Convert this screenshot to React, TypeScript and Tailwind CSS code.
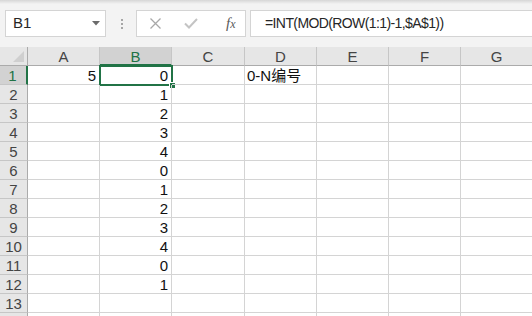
import React from "react";

const COLS = ["A", "B", "C", "D", "E", "F", "G"];
const B_VALUES = ["0", "1", "2", "3", "4", "0", "1", "2", "3", "4", "0", "1"];

function NameBox() {
  return (
    <div className="ml-[5px] flex h-[27px] w-[101px] items-center justify-between border border-[#d4d4d4] bg-white pl-[7px] pr-[5px] text-[15px] text-[#262626]">
      <span>B1</span>
      <svg width="8" height="5" viewBox="0 0 8 5">
        <path d="M0 0 H8 L4 4.5 Z" fill="#6b6b6b" />
      </svg>
    </div>
  );
}

function FormulaButtons() {
  return (
    <div className="ml-[13px] flex h-[27px] w-[110px] items-center border border-[#d4d4d4] bg-white">
      <svg className="ml-[12px]" width="13" height="13" viewBox="0 0 13 13">
        <path d="M1.5 1.5 L11.5 11.5 M11.5 1.5 L1.5 11.5" stroke="#a8a8a8" strokeWidth="1.3" />
      </svg>
      <svg className="ml-[22px]" width="14" height="11" viewBox="0 0 14 11">
        <path d="M1 5.5 L5 9.5 L13 1" stroke="#c4c4c4" strokeWidth="2" fill="none" />
      </svg>
      <span className="ml-[28px] font-['Liberation_Serif',serif] text-[15px] italic leading-none text-[#5a5a5a]">
        f<span className="text-[12px]">x</span>
      </span>
    </div>
  );
}

function Toolbar() {
  return (
    <div className="h-[47px] bg-[#f3f3f3]">
      <div className="h-[4px] bg-linear-to-b from-[#d6d6d6] to-[#f3f3f3]" />
      <div className="mt-[6px] flex items-center">
        <NameBox />
        <div className="ml-[15px] flex flex-col gap-[2px]">
          <div className="h-[2px] w-[2px] bg-[#a6a6a6]" />
          <div className="h-[2px] w-[2px] bg-[#a6a6a6]" />
          <div className="h-[2px] w-[2px] bg-[#a6a6a6]" />
        </div>
        <FormulaButtons />
        <div className="ml-[4px] flex h-[27px] flex-1 items-center border border-r-0 border-[#d4d4d4] bg-white pl-[14px] text-[14px] tracking-[-0.6px] text-[#262626]">
          =INT(MOD(ROW(1:1)-1,$A$1))
        </div>
      </div>
    </div>
  );
}

function HeaderRow() {
  return (
    <div className="grid h-[19px] grid-cols-[28px_72px_72px_73px_72px_72px_72px_72px] bg-[#e6e6e6]">
      <div className="relative border-r border-b border-[#ababab]">
        <svg className="absolute right-[3px] bottom-[3px]" width="11" height="11" viewBox="0 0 11 11">
          <path d="M11 0 V11 H0 Z" fill="#cfcfcf" />
        </svg>
      </div>
      {COLS.map((c) =>
        c === "B" ? (
          <div
            key={c}
            className="flex items-center justify-center border-r border-b-2 border-r-[#c6c6c6] border-b-[#217346] bg-[#d2d2d2] pt-[1px] text-[15px] leading-none text-[#217346]"
          >
            {c}
          </div>
        ) : (
          <div
            key={c}
            className="flex items-center justify-center border-r border-b border-r-[#c6c6c6] border-b-[#ababab] text-[15px] leading-none text-[#444]"
          >
            {c}
          </div>
        )
      )}
    </div>
  );
}

function Cell({ value, align, active }: { value?: string; align?: "left" | "right"; active?: boolean }) {
  return (
    <div
      className={
        "relative flex items-end border-r border-b border-[#d4d4d4] pb-[1px] text-[15px] leading-none text-[#111] " +
        (align === "left" ? "justify-start pl-[2px]" : "justify-end pr-[3px]")
      }
    >
      {value}
      {active && (
        <div className="absolute -top-[1px] -left-[1px] h-[21px] w-[74px] border-2 border-[#217346]">
          <div className="absolute -right-[5px] -bottom-[5px] h-[7px] w-[7px] border border-white bg-[#217346]" />
        </div>
      )}
    </div>
  );
}

function DataRow({ n, label = true }: { n: number; label?: boolean }) {
  const selected = n === 1;
  return (
    <div className="grid h-[19px] grid-cols-[28px_72px_72px_73px_72px_72px_72px_72px]">
      <div
        className={
          selected
            ? "flex items-center justify-center border-r-2 border-b border-r-[#217346] border-b-[#c6c6c6] bg-[#d2d2d2] pr-[1px] text-[15px] leading-none text-[#217346]"
            : "flex items-center justify-center border-r border-b border-r-[#ababab] border-b-[#c6c6c6] bg-[#e6e6e6] text-[15px] leading-none text-[#444]"
        }
      >
        {label ? n : null}
      </div>
      <Cell value={n === 1 ? "5" : undefined} />
      <Cell value={B_VALUES[n - 1]} active={selected} />
      <Cell />
      <Cell value={n === 1 ? "0-N编号" : undefined} align="left" />
      <Cell />
      <Cell />
      <Cell />
    </div>
  );
}

export default function App() {
  return (
    <main className="h-[316px] w-[532px] overflow-hidden bg-white font-['Liberation_Sans','Noto_Sans_CJK_SC',sans-serif]">
      <Toolbar />
      <HeaderRow />
      {Array.from({ length: 13 }, (_, i) => (
        <DataRow key={i} n={i + 1} />
      ))}
      {/* only the top edge of row 14 shows */}
      <DataRow n={14} label={false} />
    </main>
  );
}
